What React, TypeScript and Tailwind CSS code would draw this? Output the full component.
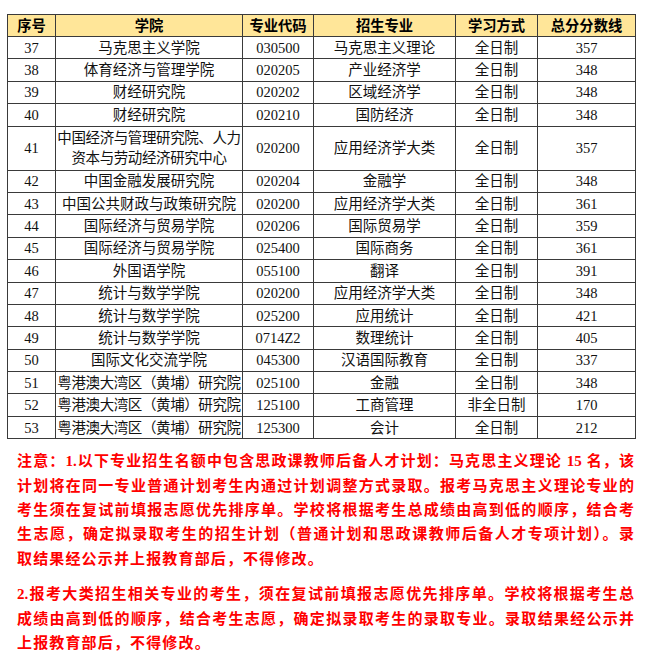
const rows: { no: string; college: React.ReactNode; code: string; major: string; mode: string; score: string; tall?: boolean; tight?: boolean }[] = [
  { no: "37", college: "马克思主义学院", code: "030500", major: "马克思主义理论", mode: "全日制", score: "357" },
  { no: "38", college: "体育经济与管理学院", code: "020205", major: "产业经济学", mode: "全日制", score: "348" },
  { no: "39", college: "财经研究院", code: "020202", major: "区域经济学", mode: "全日制", score: "348" },
  { no: "40", college: "财经研究院", code: "020210", major: "国防经济", mode: "全日制", score: "348" },
  {
    no: "41",
    college: (
      <>
        中国经济与管理研究院、人力
        <br />
        资本与劳动经济研究中心
      </>
    ),
    code: "020200",
    major: "应用经济学大类",
    mode: "全日制",
    score: "357",
    tall: true,
    tight: true,
  },
  { no: "42", college: "中国金融发展研究院", code: "020204", major: "金融学", mode: "全日制", score: "348" },
  { no: "43", college: "中国公共财政与政策研究院", code: "020200", major: "应用经济学大类", mode: "全日制", score: "361" },
  { no: "44", college: "国际经济与贸易学院", code: "020206", major: "国际贸易学", mode: "全日制", score: "359" },
  { no: "45", college: "国际经济与贸易学院", code: "025400", major: "国际商务", mode: "全日制", score: "361" },
  { no: "46", college: "外国语学院", code: "055100", major: "翻译", mode: "全日制", score: "391" },
  { no: "47", college: "统计与数学学院", code: "020200", major: "应用经济学大类", mode: "全日制", score: "348" },
  { no: "48", college: "统计与数学学院", code: "025200", major: "应用统计", mode: "全日制", score: "421" },
  { no: "49", college: "统计与数学学院", code: "0714Z2", major: "数理统计", mode: "全日制", score: "405" },
  { no: "50", college: "国际文化交流学院", code: "045300", major: "汉语国际教育", mode: "全日制", score: "337" },
  { no: "51", college: "粤港澳大湾区（黄埔）研究院", code: "025100", major: "金融", mode: "全日制", score: "348", tight: true },
  { no: "52", college: "粤港澳大湾区（黄埔）研究院", code: "125100", major: "工商管理", mode: "非全日制", score: "170", tight: true },
  { no: "53", college: "粤港澳大湾区（黄埔）研究院", code: "125300", major: "会计", mode: "全日制", score: "212", tight: true },
];

const cols = "grid grid-cols-[48px_187px_71px_142px_82px_98px]";
const cell = "flex items-center justify-center text-center border-r border-b border-[#3a3a3a]";

function Line({ text, last }: { text: string; last?: boolean }) {
  return (
    <div className={last ? "text-left tracking-[1.15px]" : "text-justify [text-align-last:justify]"}>{text}</div>
  );
}

export default function App() {
  return (
    <div className="w-[651px] h-[657px] bg-white overflow-hidden pt-[14px]">
      <div className="ml-[7px] w-[629px] border-l border-t border-[#3a3a3a] font-['Liberation_Serif','Noto_Sans_CJK_SC',serif] text-[14.5px] text-[#111]">
        <div className={`${cols} h-[22px] bg-[#ffe699] font-['Noto_Sans_CJK_SC',sans-serif] font-bold text-[14.3px] leading-none text-black`}>
          {["序号", "学院", "专业代码", "招生专业", "学习方式", "总分分数线"].map((h) => (
            <div key={h} className={cell}>
              {h}
            </div>
          ))}
        </div>
        {rows.map((r) => (
          <div key={r.no} className={`${cols} ${r.tall ? "h-[44px]" : "h-[22.4px]"} leading-[20px]`}>
            <div className={cell}>{r.no}</div>
            <div className={`${cell} ${r.tight ? "tracking-[-0.4px] whitespace-nowrap" : ""}`}>{r.college}</div>
            <div className={cell}>{r.code}</div>
            <div className={cell}>{r.major}</div>
            <div className={cell}>{r.mode}</div>
            <div className={cell}>{r.score}</div>
          </div>
        ))}
      </div>

      <div className="mt-[10px] pl-[17px] pr-[17px] font-['Liberation_Serif','Noto_Sans_CJK_SC',serif] font-bold text-[15px] leading-[24.4px] text-[#ff0000]">
        <div>
          <Line text="注意：1.以下专业招生名额中包含思政课教师后备人才计划：马克思主义理论 15 名，该" />
          <Line text="计划将在同一专业普通计划考生内通过计划调整方式录取。报考马克思主义理论专业的" />
          <Line text="考生须在复试前填报志愿优先排序单。学校将根据考生总成绩由高到低的顺序，结合考" />
          <Line text="生志愿，确定拟录取考生的招生计划（普通计划和思政课教师后备人才专项计划）。录" />
          <Line text="取结果经公示并上报教育部后，不得修改。" last />
        </div>
        <div className="mt-[11px]">
          <Line text="2.报考大类招生相关专业的考生，须在复试前填报志愿优先排序单。学校将根据考生总" />
          <Line text="成绩由高到低的顺序，结合考生志愿，确定拟录取考生的录取专业。录取结果经公示并" />
          <Line text="上报教育部后，不得修改。" last />
        </div>
      </div>
    </div>
  );
}
